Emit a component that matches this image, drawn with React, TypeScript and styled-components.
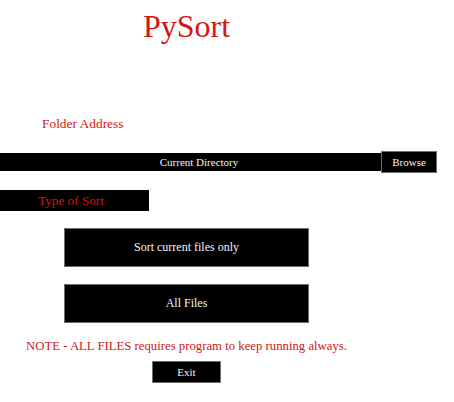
import React from "react";
import styled, { createGlobalStyle } from "styled-components";

const GlobalStyle = createGlobalStyle`
  html, body {
    margin: 0;
    padding: 0;
    background: #ffffff;
    font-family: "Liberation Serif", "Times New Roman", serif;
  }
`;

const RED = "#d41515";
const SERIF = `"Liberation Serif", "Times New Roman", serif`;

const Page = styled.div`
  width: 454px;
  height: 402px;
  overflow: hidden;
  background: #ffffff;
  display: flex;
  flex-direction: column;
  font-family: ${SERIF};
`;

const Column = styled.div`
  width: 373px;
  display: flex;
  flex-direction: column;
  align-items: center;
`;

const Title = styled.h1`
  margin: 10px 0 0 0;
  font-family: ${SERIF};
  font-weight: normal;
  font-size: 32px;
  line-height: 32px;
  color: ${RED};
`;

const FieldLabel = styled.div`
  align-self: flex-start;
  margin: 74px 0 0 42px;
  font-family: ${SERIF};
  font-size: 13.4px;
  line-height: 16px;
  color: ${RED};
`;

const DirRow = styled.div`
  display: flex;
  align-items: center;
  margin-top: 19px;
  height: 22px;
`;

const DirField = styled.div`
  width: 381px;
  height: 18px;
  background: #000;
  color: #f4f4f4;
  font-family: ${SERIF};
  font-size: 11px;
  line-height: 18px;
  text-align: center;
  padding-left: 17px;
  box-sizing: border-box;
`;

const SmallButton = styled.button<{ $w: number }>`
  width: ${(p) => p.$w}px;
  height: 22px;
  padding: 0;
  margin: 0;
  background: #000;
  color: #f4f4f4;
  border: 1px solid #6e6e6e;
  font-family: ${SERIF};
  font-size: 11px;
  line-height: 20px;
  text-align: center;
  cursor: pointer;
`;

const SectionLabel = styled.div`
  align-self: flex-start;
  width: 149px;
  height: 21px;
  margin-top: 17px;
  background: #000;
  color: ${RED};
  font-family: ${SERIF};
  font-size: 13.2px;
  line-height: 21px;
  text-align: center;
  padding-right: 7px;
  box-sizing: border-box;
`;

const BigButton = styled.button`
  width: 245px;
  height: 39px;
  margin: 17px 0 0 0;
  padding: 0;
  background: #000;
  color: #f4f4f4;
  border: 1px solid #6e6e6e;
  font-family: ${SERIF};
  font-size: 12px;
  line-height: 37px;
  text-align: center;
  cursor: pointer;
`;

const Note = styled.p`
  margin: 15px 0 0 0;
  font-family: ${SERIF};
  font-size: 12.75px;
  line-height: 16px;
  color: ${RED};
  white-space: nowrap;
`;

const ExitWrap = styled.div`
  margin-top: 7px;
  display: flex;
  justify-content: center;
`;

export default function App() {
  return (
    <>
      <GlobalStyle />
      <Page>
        <Column>
          <Title>PySort</Title>
          <FieldLabel>Folder Address</FieldLabel>
        </Column>
        <DirRow>
          <DirField>Current Directory</DirField>
          <SmallButton $w={56}>Browse</SmallButton>
        </DirRow>
        <Column>
          <SectionLabel>Type of Sort</SectionLabel>
          <BigButton>Sort current files only</BigButton>
          <BigButton>All Files</BigButton>
          <Note>NOTE - ALL FILES requires program to keep running always.</Note>
          <ExitWrap>
            <SmallButton $w={69}>Exit</SmallButton>
          </ExitWrap>
        </Column>
      </Page>
    </>
  );
}
